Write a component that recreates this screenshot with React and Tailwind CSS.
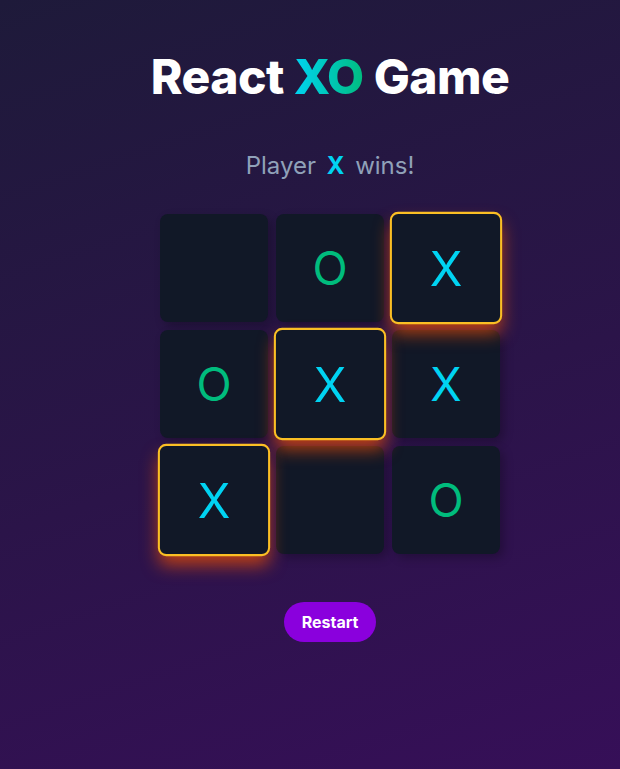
const board = ["", "O", "X", "O", "X", "X", "X", "", "O"];
const winLine = [2, 4, 6];

function Cell({ value, win }) {
  return (
    <div
      className={`w-[108px] h-[108px] rounded-lg bg-[#111827] flex items-center justify-center ${
        win
          ? "border-2 border-[#fbbf24] scale-[1.04] shadow-[0_10px_16px_-2px_rgba(214,72,10,0.85)]"
          : "shadow-[4px_4px_10px_rgba(0,0,0,0.25)]"
      }`}
    >
      <span
        className={`text-[46px] font-normal leading-none ${
          value === "X" ? "text-[#00d3f2]" : "text-[#00bc7d]"
        }`}
      >
        {value}
      </span>
    </div>
  );
}

export default function App() {
  return (
    <div
      className="min-h-[769px] w-full bg-[linear-gradient(162deg,#1e1a3a_0%,#2b1449_55%,#360f58_100%)] flex flex-col items-center pt-[48px] pl-10"
      style={{ fontFamily: "Inter, 'Noto Sans', sans-serif" }}
    >
      <h1 className="text-[48px] font-extrabold text-white leading-[58px] tracking-[-0.5px]">
        React{" "}
        <span className="bg-gradient-to-r from-[#00d3f2] to-[#00bc7d] bg-clip-text text-transparent">
          XO
        </span>{" "}
        Game
      </h1>

      <p className="mt-[44px] text-[24px] text-[#90a1b9] leading-8">
        Player <span className="mx-1 font-bold text-[#00d3f2]">X</span> wins!
      </p>

      <div className="mt-[32px] grid grid-cols-3 gap-2">
        {board.map((v, i) => (
          <Cell key={i} value={v} win={winLine.includes(i)} />
        ))}
      </div>

      <button className="mt-[48px] h-10 px-[18px] rounded-full bg-[#8a00dd] text-white font-bold text-base">
        Restart
      </button>
    </div>
  );
}
